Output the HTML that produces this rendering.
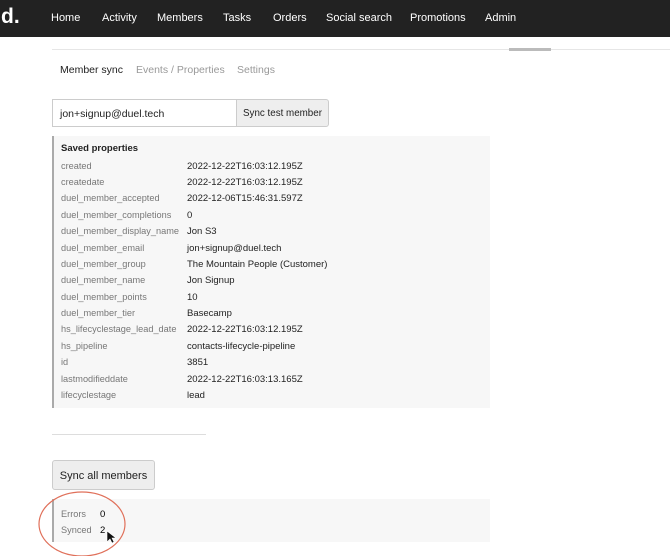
<!DOCTYPE html>
<html><head><style>
body{margin:0;width:670px;height:556px;overflow:hidden;background:#fff;font-family:"Liberation Sans",Arial,sans-serif;position:relative}
.nav{position:absolute;left:0;top:0;width:670px;height:37px;background:#222}
.logo{position:absolute;left:1px;top:5px;color:#fff;font-weight:bold;font-size:21px}
.nav span.i{position:absolute;top:12px;color:#fff;font-size:11px}
.abs{position:absolute}
.row{position:absolute;left:61px;font-size:9.2px;color:#777}
.val{position:absolute;left:187px;font-size:9.5px;color:#222}
</style></head><body>
<div class="nav"><div class="logo">d.</div>
<span class="i" style="left:51px">Home</span>
<span class="i" style="left:102px">Activity</span>
<span class="i" style="left:157px">Members</span>
<span class="i" style="left:223px">Tasks</span>
<span class="i" style="left:273px">Orders</span>
<span class="i" style="left:326px">Social search</span>
<span class="i" style="left:410px">Promotions</span>
<span class="i" style="left:485px">Admin</span>
</div>
<div class="abs" style="left:52px;top:49px;width:618px;height:1px;background:#e6e6e6"></div>
<div class="abs" style="left:509px;top:48px;width:42px;height:3px;background:#bbb"></div>
<div class="abs" style="left:60px;top:64px;font-size:10.5px;color:#222">Member sync</div>
<div class="abs" style="left:136px;top:64px;font-size:10.5px;color:#999">Events / Properties</div>
<div class="abs" style="left:237px;top:64px;font-size:10.5px;color:#999">Settings</div>
<div class="abs" style="left:52px;top:99px;border:1px solid #ccc;font-size:10.5px;line-height:28px;padding-left:7px;box-sizing:border-box;width:185px;height:28px;color:#222">jon+signup@duel.tech</div>
<div class="abs" style="left:236px;top:99px;width:93px;height:28px;background:#eee;border:1px solid #ccc;box-sizing:border-box;border-radius:0 3px 3px 0;font-size:9.8px;text-align:center;line-height:28px;color:#222">Sync test member</div>
<div class="abs" style="left:52px;top:136px;width:438px;height:272px;background:#f7f7f7;border-left:2px solid #aaa;box-sizing:border-box"></div>
<div class="abs" style="left:61px;top:143px;font-size:9.5px;font-weight:bold;color:#222">Saved properties</div>
<div class="row" style="top:161px">created</div><div class="val" style="top:161px">2022-12-22T16:03:12.195Z</div>
<div class="row" style="top:177px">createdate</div><div class="val" style="top:177px">2022-12-22T16:03:12.195Z</div>
<div class="row" style="top:193px">duel_member_accepted</div><div class="val" style="top:193px">2022-12-06T15:46:31.597Z</div>
<div class="row" style="top:210px">duel_member_completions</div><div class="val" style="top:210px">0</div>
<div class="row" style="top:226px">duel_member_display_name</div><div class="val" style="top:226px">Jon S3</div>
<div class="row" style="top:243px">duel_member_email</div><div class="val" style="top:243px">jon+signup@duel.tech</div>
<div class="row" style="top:259px">duel_member_group</div><div class="val" style="top:259px">The Mountain People (Customer)</div>
<div class="row" style="top:275px">duel_member_name</div><div class="val" style="top:275px">Jon Signup</div>
<div class="row" style="top:292px">duel_member_points</div><div class="val" style="top:292px">10</div>
<div class="row" style="top:308px">duel_member_tier</div><div class="val" style="top:308px">Basecamp</div>
<div class="row" style="top:324px">hs_lifecyclestage_lead_date</div><div class="val" style="top:324px">2022-12-22T16:03:12.195Z</div>
<div class="row" style="top:341px">hs_pipeline</div><div class="val" style="top:341px">contacts-lifecycle-pipeline</div>
<div class="row" style="top:357px">id</div><div class="val" style="top:357px">3851</div>
<div class="row" style="top:374px">lastmodifieddate</div><div class="val" style="top:374px">2022-12-22T16:03:13.165Z</div>
<div class="row" style="top:390px">lifecyclestage</div><div class="val" style="top:390px">lead</div>
<div class="abs" style="left:52px;top:434px;width:154px;height:1px;background:#ddd"></div>
<div class="abs" style="left:52px;top:460px;width:103px;height:30px;background:#eee;border:1px solid #ccc;box-sizing:border-box;border-radius:3px;font-size:11px;text-align:center;line-height:30px;color:#222">Sync all members</div>
<div class="abs" style="left:52px;top:499px;width:438px;height:43px;background:#f7f7f7;border-left:2px solid #aaa;box-sizing:border-box"></div>
<div class="row" style="top:509px">Errors</div><div class="abs" style="left:100px;top:509px;font-size:9.5px">0</div>
<div class="row" style="top:525px">Synced</div><div class="abs" style="left:100px;top:525px;font-size:9.5px">2</div>
<svg class="abs" style="left:0;top:0" width="670" height="556"><ellipse cx="82" cy="524" rx="43" ry="32" fill="none" stroke="#e0705a" stroke-width="1.2"/><path d="M107 531 l0 11 l3 -3 l2 4 l2 -1 l-2 -4 l4 0 z" fill="#111" stroke="#fff" stroke-width="0.6"/></svg>
</body></html>
